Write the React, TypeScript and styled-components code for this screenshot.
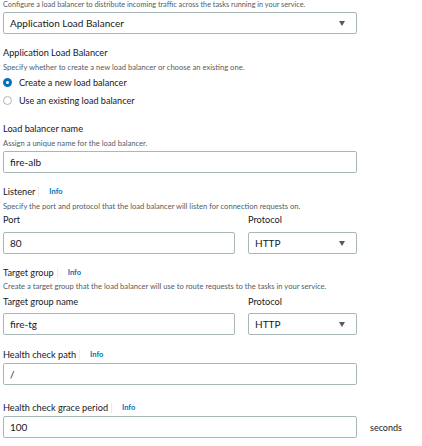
import styled, { createGlobalStyle } from 'styled-components'

const Global = createGlobalStyle`
	body {
		margin: 0;
		background: #fff;
		font-family: Lato, "Open Sans", sans-serif;
		color: #16191f;
	}
`

const Page = styled.div`
	padding: 0 0 0 3px;
	width: 420px;
`

const Desc = styled.div<{ $mt?: number; $size?: number }>`
	font-size: ${p => p.$size ?? 7.6}px;
	line-height: 10px;
	color: #545b64;
	margin-top: ${p => p.$mt ?? 3}px;
	white-space: nowrap;
`

const Label = styled.div<{ $mt?: number }>`
	display: flex;
	align-items: center;
	font-size: 9.2px;
	line-height: 12px;
	color: #16191f;
	margin-top: ${p => p.$mt ?? 0}px;
	white-space: nowrap;
`

const Info = styled.span`
	display: inline-flex;
	align-items: center;
	font-size: 7.5px;
	font-weight: bold;
	color: #0073bb;
	&::before {
		content: "";
		display: inline-block;
		width: 1px;
		height: 10px;
		background: #eaeded;
		margin: 0 10px 0 3px;
	}
`

const Box = styled.div<{ $w?: number; $mt?: number }>`
	box-sizing: border-box;
	width: ${p => p.$w ?? 354}px;
	height: 22px;
	margin-top: ${p => p.$mt ?? 3}px;
	border: 1px solid #aab7b8;
	border-radius: 2px;
	display: flex;
	align-items: center;
	justify-content: space-between;
	padding: 0 8px 0 6px;
	font-size: 10px;
	color: #16191f;
	background: #fff;
`

const Caret = styled.span`
	width: 0;
	height: 0;
	border-left: 3.5px solid transparent;
	border-right: 3.5px solid transparent;
	border-top: 5px solid #545b64;
	margin-right: 3px;
`

const RadioRow = styled.label<{ $mt?: number }>`
	display: flex;
	align-items: center;
	gap: 7px;
	height: 14px;
	margin-top: ${p => p.$mt ?? 0}px;
	font-size: 9.1px;
	color: #16191f;
`

const Dot = styled.span<{ $on?: boolean }>`
	box-sizing: border-box;
	width: 9px;
	height: 9px;
	border-radius: 50%;
	background: #fff;
	border: ${p => (p.$on ? '3px solid #0073bb' : '1px solid #aab7b8')};
`

const Row = styled.div`
	display: flex;
	gap: 13px;
	align-items: flex-start;
`

const Col = styled.div`
	display: flex;
	flex-direction: column;
`

const Suffix = styled.span`
	font-size: 9px;
	color: #16191f;
	margin: 8px 0 0 0;
`

const Select = ({ value, w, mt }: { value: string; w?: number; mt?: number }) => (
	<Box $w={w} $mt={mt}>
		<span>{value}</span>
		<Caret />
	</Box>
)

export default function App() {
	return (
		<Page>
			<Global />
			<Desc $mt={0} $size={7.3}>Configure a load balancer to distribute incoming traffic across the tasks running in your service.</Desc>
			<Select value="Application Load Balancer" mt={2} />

			<Label $mt={13}>Application Load Balancer</Label>
			<Desc>Specify whether to create a new load balancer or choose an existing one.</Desc>
			<RadioRow $mt={3}><Dot $on />Create a new load balancer</RadioRow>
			<RadioRow $mt={4}><Dot />Use an existing load balancer</RadioRow>

			<Label $mt={16}>Load balancer name</Label>
			<Desc>Assign a unique name for the load balancer.</Desc>
			<Box $mt={3}>fire-alb</Box>

			<Label $mt={13}>Listener<Info>Info</Info></Label>
			<Desc>Specify the port and protocol that the load balancer will listen for connection requests on.</Desc>
			<Row>
				<Col>
					<Label $mt={3}>Port</Label>
					<Box $w={232} $mt={6}>80</Box>
				</Col>
				<Col>
					<Label $mt={3}>Protocol</Label>
					<Select value="HTTP" w={109} mt={6} />
				</Col>
			</Row>

			<Label $mt={13}>Target group<Info>Info</Info></Label>
			<Desc $mt={2}>Create a target group that the load balancer will use to route requests to the tasks in your service.</Desc>
			<Row>
				<Col>
					<Label $mt={5}>Target group name</Label>
					<Box $w={232} $mt={5}>fire-tg</Box>
				</Col>
				<Col>
					<Label $mt={5}>Protocol</Label>
					<Select value="HTTP" w={109} mt={5} />
				</Col>
			</Row>

			<Label $mt={14}>Health check path<Info>Info</Info></Label>
			<Box $mt={2}>/</Box>

			<Label $mt={17}>Health check grace period<Info>Info</Info></Label>
			<Row>
				<Box $mt={2}>100</Box>
				<Suffix>seconds</Suffix>
			</Row>
		</Page>
	)
}
